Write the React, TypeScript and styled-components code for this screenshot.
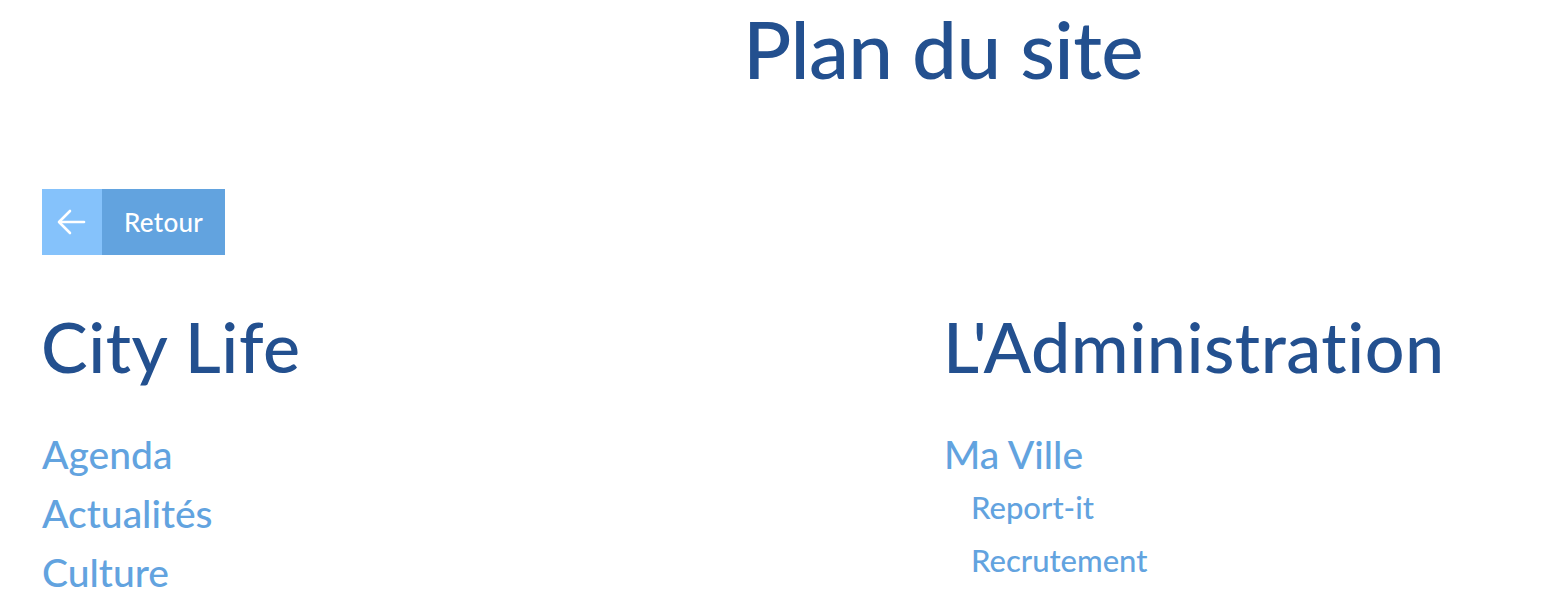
import React from "react";
import styled, { createGlobalStyle } from "styled-components";

const Global = createGlobalStyle`
  html, body { margin: 0; padding: 0; background: #ffffff; }
  body { font-family: Lato, "Open Sans", sans-serif; }
  a { text-decoration: none; }
`;

const Page = styled.div`
  width: 1552px;
  height: 594px;
  overflow: hidden;
  box-sizing: border-box;
`;

const Title = styled.h1`
  margin: 0;
  padding: 0 0 0 334px;
  text-align: center;
  font-family: Lato, sans-serif;
  font-weight: 500;
  font-size: 80px;
  line-height: 96px;
  color: #23508f;
  letter-spacing: -0.6px;
`;

const Body = styled.div`
  padding: 93px 0 0 42px;
`;

const BackButton = styled.a`
  display: inline-flex;
  height: 66px;
  background: #62a3df;
  color: #ffffff;
  cursor: pointer;
`;

const IconBox = styled.span`
  display: flex;
  align-items: center;
  justify-content: center;
  width: 60px;
  background: #85c2fb;
`;

const ButtonLabel = styled.span`
  display: flex;
  align-items: center;
  padding: 0 22px 0 22px;
  font-size: 26px;
  font-weight: 500;
  letter-spacing: 0.3px;
`;

const Columns = styled.div`
  display: grid;
  grid-template-columns: 902px 1fr;
  margin-top: 49px;
`;

const Column = styled.section`
  display: flex;
  flex-direction: column;
`;

const Heading = styled.h2`
  margin: 0 0 0 -1px;
  font-size: 70px;
  line-height: 84px;
  font-weight: 500;
  color: #23508f;
  letter-spacing: 0.5px;
`;

const LinkList = styled.ul`
  list-style: none;
  margin: 37px 0 0 0;
  padding: 0;
`;

const Item = styled.li`
  font-size: 39px;
  line-height: 59px;
  font-weight: 500;
  color: #62a3df;
`;

const SubList = styled.ul`
  list-style: none;
  margin: -3px 0 0 0;
  padding: 0 0 0 27px;
`;

const SubItem = styled.li`
  font-size: 31px;
  line-height: 53px;
  font-weight: 500;
  color: #62a3df;
`;

const Arrow = () => (
  <svg width="34" height="34" viewBox="0 0 34 34" fill="none" stroke="#fff" strokeWidth="2.6" strokeLinecap="round" strokeLinejoin="round">
    <path d="M29 17H5" />
    <path d="M15 6L4 17l11 11" />
  </svg>
);

export default function App() {
  return (
    <Page>
      <Global />
      <Title>Plan du site</Title>
      <Body>
        <BackButton>
          <IconBox>
            <Arrow />
          </IconBox>
          <ButtonLabel>Retour</ButtonLabel>
        </BackButton>
        <Columns>
          <Column>
            <Heading>City Life</Heading>
            <LinkList>
              <Item>Agenda</Item>
              <Item>Actualités</Item>
              <Item>Culture</Item>
            </LinkList>
          </Column>
          <Column>
            <Heading>L'Administration</Heading>
            <LinkList>
              <Item>Ma Ville</Item>
            </LinkList>
            <SubList>
              <SubItem>Report-it</SubItem>
              <SubItem>Recrutement</SubItem>
            </SubList>
          </Column>
        </Columns>
      </Body>
    </Page>
  );
}
